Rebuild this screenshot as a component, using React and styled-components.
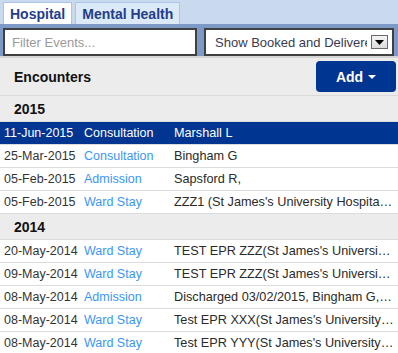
import React from 'react'
import styled, { createGlobalStyle } from 'styled-components'

const GlobalStyle = createGlobalStyle`
  html, body {
    margin: 0;
    padding: 0;
    background: #fff;
    font-family: "Liberation Sans", Arial, sans-serif;
  }
`;

const Page = styled.div`
  width: 398px;
  height: 353px;
  overflow: hidden;
  background: #fff;
`;

const TabBar = styled.div`
  display: flex;
  gap: 3px;
  height: 24px;
  padding: 2px 0 0 3px;
  box-sizing: border-box;
  background: #c9daee;
`;

const Tab = styled.div`
  display: flex;
  align-items: center;
  padding: 0 6px;
  height: 22px;
  box-sizing: border-box;
  border: 1px solid #a9c5ec;
  border-bottom: none;
  background: ${p => (p.active ? '#fff' : '#dbeaf6')};
  color: #233d8c;
  font-weight: bold;
  font-size: 14px;
`;

const FilterBar = styled.div`
  display: flex;
  gap: 7px;
  height: 34px;
  padding: 4px 4px 0 3px;
  box-sizing: border-box;
  background: #7d99c7;
  border-bottom: 2px solid #d4d4d4;
`;

const FilterInput = styled.input`
  width: 194px;
  height: 28px;
  box-sizing: border-box;
  border: 2px solid #404040;
  padding: 0 7px;
  font-family: "Liberation Sans", Arial, sans-serif;
  font-size: 13px;
  color: #333;
  outline: none;
  &::placeholder {
    color: #9a9a9a;
  }
`;

const SelectBox = styled.div`
  flex: 1;
  min-width: 0;
  height: 28px;
  box-sizing: border-box;
  border: 2px solid #404040;
  background: #fff;
  display: flex;
  align-items: center;
  gap: 4px;
  padding: 0 4px 0 9px;
  font-size: 13px;
  color: #3a3a50;
  white-space: nowrap;
  overflow: hidden;
`;

const SelectText = styled.span`
  flex: 1;
  min-width: 0;
  overflow: hidden;
`;

const ArrowBox = styled.span`
  flex: none;
  width: 17px;
  height: 14px;
  box-sizing: border-box;
  border: 1px solid #6a6a6a;
  background: linear-gradient(#f4f4f4, #dcdcdc);
  display: flex;
  align-items: center;
  justify-content: center;
`;

const HeaderBar = styled.div`
  display: flex;
  align-items: center;
  justify-content: space-between;
  height: 37px;
  padding: 0 2px 0 14px;
  background: #ececec;
  border-bottom: 1px solid #dadada;
`;

const Title = styled.span`
  font-size: 14px;
  font-weight: bold;
  color: #111;
`;

const AddButton = styled.button`
  width: 80px;
  height: 31px;
  border: none;
  border-radius: 4px;
  background: #003591;
  color: #fff;
  font-family: "Liberation Sans", Arial, sans-serif;
  font-weight: bold;
  font-size: 14px;
  display: flex;
  align-items: center;
  justify-content: center;
  gap: 5px;
`;

const YearRow = styled.div`
  height: 25px;
  display: flex;
  align-items: center;
  padding-left: 14px;
  background: #ececec;
  border-bottom: 1px solid #dcdcdc;
  font-size: 14px;
  font-weight: bold;
  color: #111;
`;

const Row = styled.div`
  display: grid;
  grid-template-columns: 80px 90px minmax(0, 1fr);
  height: 22px;
  align-items: center;
  padding: 0 4px;
  border-bottom: 1px solid #dcdcdc;
  font-size: 12.5px;
  background: ${p => (p.selected ? '#003591' : '#fff')};
  color: ${p => (p.selected ? '#fff' : '#333')};
`;

const Cell = styled.span`
  min-width: 0;
  white-space: nowrap;
  overflow: hidden;
  text-overflow: ellipsis;
`;

const TypeCell = styled(Cell)`
  color: ${p => (p.selected ? '#fff' : '#3a96f5')};
`;

const DescCell = styled(Cell)`
  font-size: 12.7px;
  color: ${p => (p.selected ? '#fff' : '#2a2a2a')};
`;

const groups = [
  {
    year: '2015',
    rows: [
      ['11-Jun-2015', 'Consultation', 'Marshall L', true],
      ['25-Mar-2015', 'Consultation', 'Bingham G'],
      ['05-Feb-2015', 'Admission', 'Sapsford R,'],
      ['05-Feb-2015', 'Ward Stay', "ZZZ1 (St James's University Hospital) - Bingham G"],
    ],
  },
  {
    year: '2014',
    rows: [
      ['20-May-2014', 'Ward Stay', "TEST EPR ZZZ(St James's University Hospital)"],
      ['09-May-2014', 'Ward Stay', "TEST EPR ZZZ(St James's University Hospital)"],
      ['08-May-2014', 'Admission', 'Discharged 03/02/2015, Bingham G, Sapsford R'],
      ['08-May-2014', 'Ward Stay', "Test EPR XXX(St James's University Hospital)"],
      ['08-May-2014', 'Ward Stay', "Test EPR YYY(St James's University Hospital)"],
    ],
  },
];

const App = () => {
  return (
    <>
      <GlobalStyle />
      <Page>
        <TabBar>
          <Tab active>Hospital</Tab>
          <Tab>Mental Health</Tab>
        </TabBar>
        <FilterBar>
          <FilterInput placeholder="Filter Events..." />
          <SelectBox>
            <SelectText>Show Booked and Delivered</SelectText>
            <ArrowBox>
              <svg width="9" height="5" viewBox="0 0 9 5">
                <path d="M0 0h9L4.5 5z" fill="#000" />
              </svg>
            </ArrowBox>
          </SelectBox>
        </FilterBar>
        <HeaderBar>
          <Title>Encounters</Title>
          <AddButton>
            Add
            <svg width="8" height="4" viewBox="0 0 8 4">
              <path d="M0 0h8L4 4z" fill="#fff" />
            </svg>
          </AddButton>
        </HeaderBar>
        {groups.map(g => (
          <div key={g.year}>
            <YearRow>{g.year}</YearRow>
            {g.rows.map(([date, type, desc, selected], i) => (
              <Row key={i} selected={selected}>
                <Cell>{date}</Cell>
                <TypeCell selected={selected}>{type}</TypeCell>
                <DescCell selected={selected}>{desc}</DescCell>
              </Row>
            ))}
          </div>
        ))}
      </Page>
    </>
  )
}

export default App;
